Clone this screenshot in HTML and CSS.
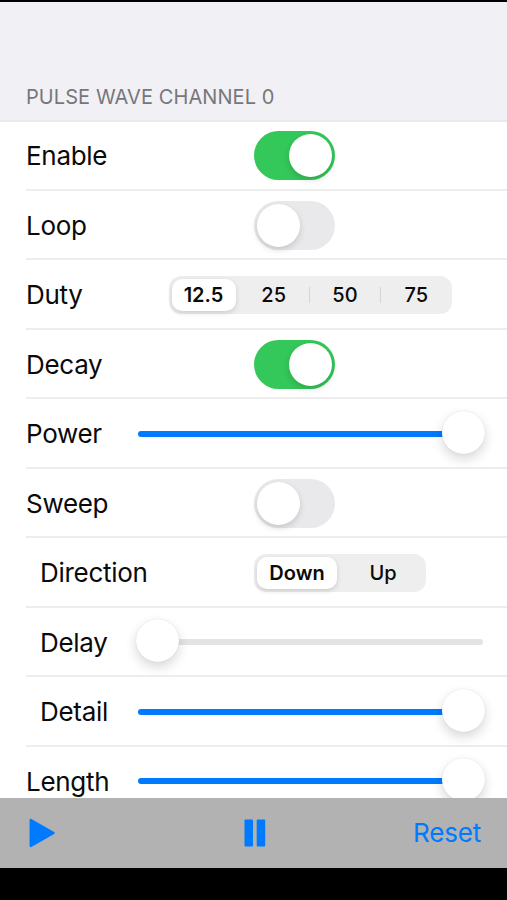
FILE: index.html
```
<!DOCTYPE html>
<html lang="en">
<head>
    <meta charset="UTF-8">
    <meta name="viewport" content="width=device-width, initial-scale=1.0">
    <link rel="stylesheet" href="styles.css">
    <title>Pulse Wave Channel 0</title>
</head>
<body>
    <main class="screen">

        <h1 class="section-title">PULSE WAVE CHANNEL 0</h1>

        <div class="settings">
            <div class="row">
                <span class="label">Enable</span>
                <button class="toggle on" role="switch" aria-checked="true"><span class="knob"></span></button>
            </div>
            <div class="row">
                <span class="label">Loop</span>
                <button class="toggle" role="switch" aria-checked="false"><span class="knob"></span></button>
            </div>
            <div class="row">
                <span class="label">Duty</span>
                <div class="segments duty">
                    <button class="segment selected">12.5</button>
                    <button class="segment">25</button>
                    <button class="segment divided">50</button>
                    <button class="segment divided">75</button>
                </div>
            </div>
            <div class="row">
                <span class="label">Decay</span>
                <button class="toggle on" role="switch" aria-checked="true"><span class="knob"></span></button>
            </div>
            <div class="row">
                <span class="label">Power</span>
                <div class="slider full"><span class="thumb"></span></div>
            </div>
            <div class="row">
                <span class="label">Sweep</span>
                <button class="toggle" role="switch" aria-checked="false"><span class="knob"></span></button>
            </div>
            <div class="row">
                <span class="label sub wide">Direction</span>
                <div class="segments direction">
                    <button class="segment selected">Down</button>
                    <button class="segment">Up</button>
                </div>
            </div>
            <div class="row">
                <span class="label sub">Delay</span>
                <div class="slider"><span class="thumb"></span></div>
            </div>
            <div class="row">
                <span class="label sub">Detail</span>
                <div class="slider full"><span class="thumb"></span></div>
            </div>
            <div class="row">
                <span class="label">Length</span>
                <div class="slider full"><span class="thumb"></span></div>
            </div>
        </div>

        <div class="toolbar">
            <button class="tool play" aria-label="Play">
                <svg width="27" height="30" viewBox="0 0 27 30">
                    <path d="M1.8 2 L24.5 15 L1.8 28 Z" fill="#007aff" stroke="#007aff" stroke-width="2.5" stroke-linejoin="round"/>
                </svg>
            </button>
            <button class="tool" aria-label="Pause">
                <svg width="22" height="28" viewBox="0 0 22 28">
                    <rect x="0.5" y="0.5" width="8.5" height="27" rx="1" fill="#007aff"/>
                    <rect x="12.7" y="0.5" width="8.5" height="27" rx="1" fill="#007aff"/>
                </svg>
            </button>
            <button class="tool reset">Reset</button>
        </div>

    </main>
</body>
</html>
```
FILE: styles.css
```
* {
    box-sizing: border-box;
}

body {
    margin: 0;
    background-color: #000;
    font-family: Inter, "Liberation Sans", sans-serif;
    color: #0a0a0a;
}

button {
    padding: 0;
    border: none;
    background: none;
    font-family: inherit;
    color: inherit;
}

.screen {
    display: flex;
    flex-direction: column;
    width: 507px;
    height: 900px;
    padding: 2px 0 32px;
    overflow: hidden;
}

.section-title {
    flex: none;
    height: 120px;
    margin: 0;
    padding: 83px 0 0 26px;
    border-bottom: 2px solid #e9e9ec;
    background-color: #f1f0f5;
    font-size: 20px;
    line-height: 25px;
    font-weight: 400;
    letter-spacing: 0.08px;
    color: #77777b;
}

/* ROWS */

.settings {
    flex: 1;
    min-height: 0;
    padding-left: 26px;
    overflow: hidden;
    background-color: white;
}

.row {
    display: flex;
    align-items: center;
    height: 69.5px;
    margin-top: -1px;
    margin-bottom: 1px;
    padding-top: 2px;
    border-bottom: 2px solid #ededee;
}

.label {
    flex: none;
    width: 112px;
    padding-top: 1px;
    font-size: 26px;
    line-height: 32px;
    letter-spacing: -0.3px;
}

.sub {
    padding-left: 14px;
}

.wide {
    width: 130px;
}

/* TOGGLES */

.toggle {
    display: flex;
    width: 81px;
    height: 49px;
    margin-left: 116px;
    padding: 3px;
    border-radius: 25px;
    background-color: #e9e9eb;
}

.toggle.on {
    justify-content: flex-end;
    background-color: #34c759;
}

.knob {
    width: 43px;
    height: 43px;
    border-radius: 50%;
    background-color: white;
    box-shadow: 0 3px 6px rgba(0, 0, 0, 0.15);
}

/* SEGMENTED CONTROLS */

.segments {
    display: flex;
    align-items: center;
    height: 38px;
    padding-left: 3px;
    border-radius: 12px;
    background-color: #eeeeef;
}

.duty {
    width: 283px;
    margin-left: 30.5px;
}

.direction {
    width: 172px;
    margin-left: 98px;
}

.segment {
    flex: 1;
    height: 32px;
    font-size: 20px;
    line-height: 32px;
    font-weight: 500;
}

.selected {
    flex: none;
    width: 64px;
    margin-right: 3px;
    border-radius: 10px;
    background-color: white;
    box-shadow: 0 2px 5px rgba(0, 0, 0, 0.15);
    font-weight: 600;
}

.direction .selected {
    width: 80px;
}

.divided {
    height: 16px;
    border-left: 1px solid #d5d5d7;
    line-height: 16px;
}

/* SLIDERS */

.slider {
    display: flex;
    align-items: center;
    width: 345px;
    height: 6px;
    border-radius: 3px;
    background-color: #e3e3e4;
}

.full {
    justify-content: flex-end;
    background-color: #007aff;
}

.thumb {
    flex: none;
    width: 43px;
    height: 43px;
    margin: -3px -2px 0;
    border-radius: 50%;
    background-color: white;
    box-shadow: 0 0 1px rgba(0, 0, 0, 0.15), 0 5px 12px rgba(0, 0, 0, 0.16);
}

/* TOOLBAR */

.toolbar {
    flex: none;
    display: flex;
    justify-content: space-between;
    align-items: center;
    height: 70px;
    padding: 0 26px 0 29px;
    background-color: #b2b2b2;
}

.tool {
    display: flex;
    align-items: center;
}

.play,
.reset {
    width: 69px;
}

.reset {
    justify-content: flex-end;
    font-size: 26px;
    line-height: 32px;
    letter-spacing: -0.2px;
    color: #007aff;
}
```
